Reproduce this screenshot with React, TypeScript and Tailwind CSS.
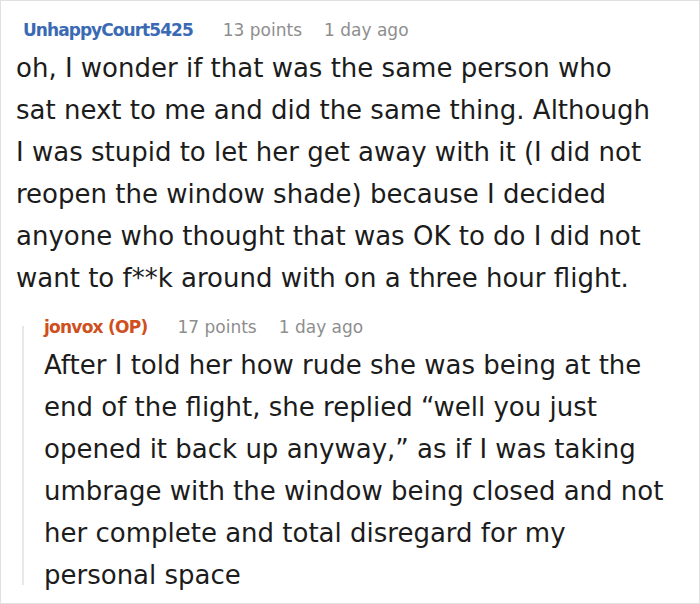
export default function App() {
  return (
    <div
      className="w-[700px] h-[604px] bg-white border border-[#e0e0e0] overflow-hidden"
      style={{ fontFamily: '"DejaVu Sans", Verdana, sans-serif' }}
    >
      {/* Parent comment */}
      <div className="pl-[15px] pt-[17px]">
        <div className="flex items-baseline pl-[7px] text-[17px] leading-[24px] mb-[5px]">
          <span className="font-bold text-[#3a6ab4] tracking-[-0.95px] mr-[30px]">UnhappyCourt5425</span>
          <span className="text-[#8e8e8e] mr-[22px]">13 points</span>
          <span className="text-[#8e8e8e]">1 day ago</span>
        </div>
        <p className="w-[640px] text-[26px] leading-[42px] text-[#1c1c1c]">
          oh, I wonder if that was the same person who sat next to me and did the same thing. Although I was stupid
          to let her get away with it (I did not reopen the window shade) because I decided anyone who thought that
          was OK to do I did not want to f**k around with on a three hour flight.
        </p>
      </div>

      {/* Reply */}
      <div className="flex mt-[16px] pl-[21px]">
        <div className="w-[2px] my-[11px] bg-[#e8e8e8] shrink-0" />
        <div className="pl-[20px] pr-[20px]">
          <div className="flex items-baseline text-[17px] leading-[24px] mb-[5px]">
            <span className="font-bold text-[#cf4f1d] tracking-[-0.75px] mr-[30px]">jonvox (OP)</span>
            <span className="text-[#8e8e8e] mr-[22px]">17 points</span>
            <span className="text-[#8e8e8e]">1 day ago</span>
          </div>
          <p className="text-[26px] leading-[42px] text-[#1c1c1c]">
            After I told her how rude she was being at the end of the flight, she replied “well you just opened it
            back up anyway,” as if I was taking umbrage with the window being closed and not her complete and total
            disregard for my personal space
          </p>
        </div>
      </div>
    </div>
  )
}
